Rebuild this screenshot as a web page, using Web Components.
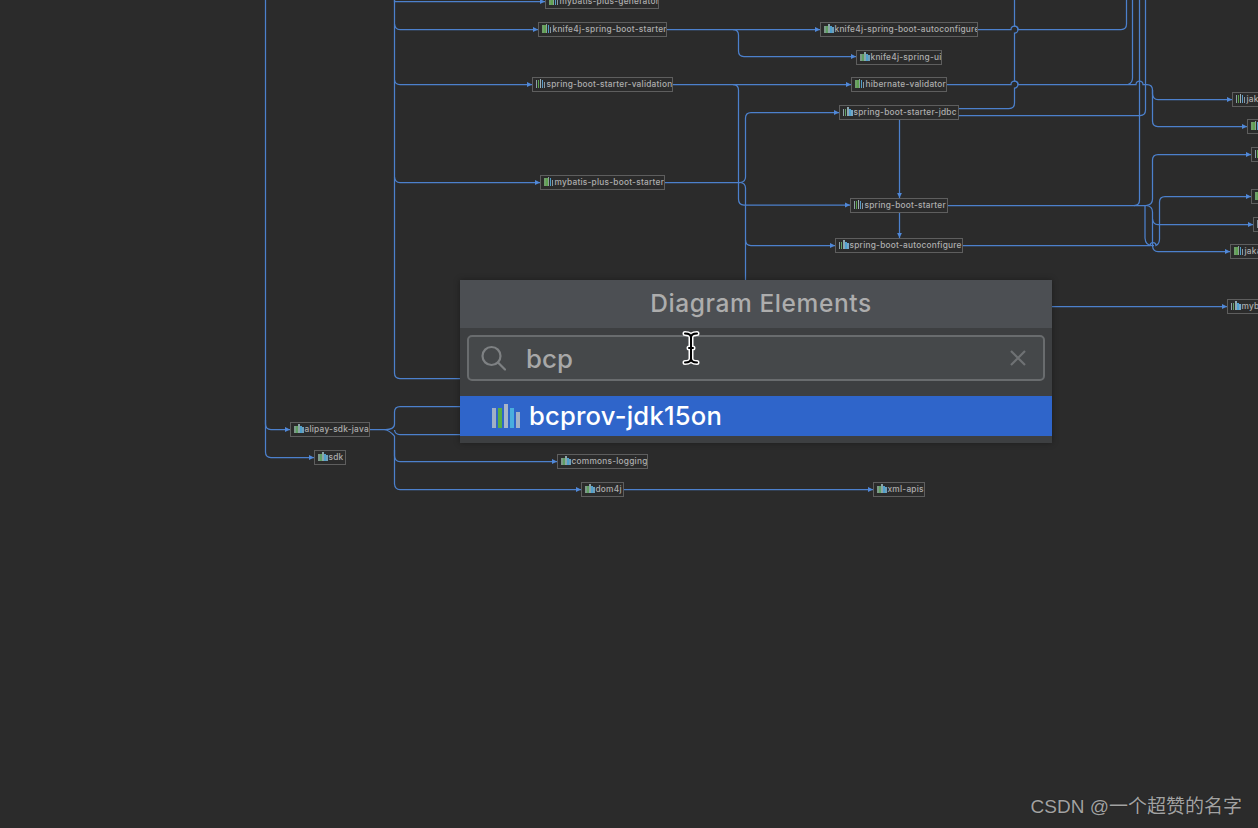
<!DOCTYPE html>
<html lang="en">
<head>
<meta charset="utf-8">
<title>Diagram Elements</title>
<style>
html,body{margin:0;padding:0;background:#2b2b2b;overflow:hidden}
</style>
</head>
<body>
<dep-graph>
  <dep-node x="545" y="-6" w="114" v="green">mybatis-plus-generator</dep-node>
  <dep-node x="538" y="22" w="129" v="green">knife4j-spring-boot-starter</dep-node>
  <dep-node x="532" y="77" w="141" v="thin">spring-boot-starter-validation</dep-node>
  <dep-node x="540" y="175" w="125" v="green">mybatis-plus-boot-starter</dep-node>
  <dep-node x="820" y="22" w="158" v="teal">knife4j-spring-boot-autoconfigure</dep-node>
  <dep-node x="856" y="50" w="86" v="teal">knife4j-spring-ui</dep-node>
  <dep-node x="851" y="77" w="96" v="green">hibernate-validator</dep-node>
  <dep-node x="839" y="105" w="120" v="blue">spring-boot-starter-jdbc</dep-node>
  <dep-node x="850" y="198" w="98" v="thin">spring-boot-starter</dep-node>
  <dep-node x="835" y="238" w="128" v="blue">spring-boot-autoconfigure</dep-node>
  <dep-node x="1232" y="92" w="60" v="thin">jak</dep-node>
  <dep-node x="1247" y="119" w="40" v="green"></dep-node>
  <dep-node x="1251" y="147" w="40" v="thin"></dep-node>
  <dep-node x="1251" y="189" w="40" v="green"></dep-node>
  <dep-node x="1253" y="217" w="40" v="none"></dep-node>
  <dep-node x="1230" y="244" w="60" v="green">jakar</dep-node>
  <dep-node x="1227" y="299" w="60" v="blue">myb</dep-node>
  <dep-node x="290" y="422" w="80" v="teal">alipay-sdk-java</dep-node>
  <dep-node x="314" y="450" w="32" v="teal">sdk</dep-node>
  <dep-node x="557" y="454" w="91" v="teal">commons-logging</dep-node>
  <dep-node x="581" y="482" w="43" v="teal">dom4j</dep-node>
  <dep-node x="873" y="482" w="52" v="teal">xml-apis</dep-node>

  <search-popup slot="overlay" title-text="Diagram Elements" query="bcp">
    <result-row>bcprov-jdk15on</result-row>
  </search-popup>
  <water-mark slot="overlay">CSDN @一个超赞的名字</water-mark>
</dep-graph>

<script>
const E = [
 ['M265.5 0V424Q265.5 429.5 271 429.5H290',1],
 ['M265.5 420V452Q265.5 457.5 271 457.5H314',1],
 ['M394.5 0V373Q394.5 378.5 400 378.5H470',0],
 ['M394.5 0V1.5H545',1],
 ['M394.5 24Q395 29.5 400 29.5H538',1],
 ['M394.5 80Q395 84.5 400 84.5H532',1],
 ['M394.5 177Q395 182.5 400 182.5H540',1],
 ['M667 29.5H820',1],
 ['M733 29.5Q738.5 29.5 738.5 35V51Q738.5 56.5 744 56.5H856',1],
 ['M673 84.5H851',1],
 ['M733 84.5Q738.5 84.5 738.5 90V199Q738.5 205 744 205H850',1],
 ['M665 182.5H740',0],
 ['M740 182.5Q745.5 182 745.5 177V118Q745.5 112.5 751 112.5H839',1],
 ['M740 182.5Q745.5 183 745.5 188V240Q745.5 245.5 751 245.5H835',1],
 ['M745.5 240V290',0],
 ['M959 108.5H1009Q1014.5 108.5 1014.5 103V88A3.5 3.5 0 0 0 1014.5 81V33A3.5 3.5 0 0 0 1014.5 26V0',0],
 ['M959 115.5H1140Q1145.5 115.5 1145.5 110V0',0],
 ['M899.5 119V198',1],
 ['M899.5 212V238',1],
 ['M978 29.5H1011A3.5 3.5 0 0 1 1018 29.5H1121Q1126.5 29.5 1126.5 24V0',0],
 ['M947 84.5H1011A3.5 3.5 0 0 1 1018 84.5H1136A3.5 3.5 0 0 1 1143 84.5H1147Q1152.5 84.5 1152.5 90V94Q1153 99.5 1158 99.5H1232',1],
 ['M1152.5 90V121Q1152.5 126.5 1158 126.5H1247',1],
 ['M1128 84.5Q1132.5 83 1132.5 78V0',0],
 ['M1139.5 0V200Q1139.5 205.5 1134 205.5',0],
 ['M948 205.5H1146',0],
 ['M1146 205.5Q1152.5 205 1152.5 199V160Q1152.5 154.5 1158 154.5H1251',1],
 ['M1146 205.5Q1152.5 206 1152.5 212V246Q1153 251.5 1158 251.5H1230',1],
 ['M1152.5 219Q1153 224.5 1158 224.5H1253',1],
 ['M1145 205.5V238Q1145.5 245.5 1152 245.5H1154',0],
 ['M963 245.5H1150A3 3 0 0 1 1156 245.5Q1159.5 244 1159.5 239V202Q1159.5 196.5 1165 196.5H1251',1],
 ['M1050 306.5H1227',1],
 ['M370 429.5H384Q389 430 394.5 436',0],
 ['M384 429.5Q394.5 430 394.5 424V412Q394.5 406.5 400 406.5H470',0],
 ['M394.5 430Q395 434.5 400 434.5H470',0],
 ['M394.5 436V456Q395 461.5 400 461.5H557',1],
 ['M394.5 450V484Q395 489.5 400 489.5H581',1],
 ['M624 489.5H873',1],
];

class DepGraph extends HTMLElement{
  constructor(){
    super();
    const paths = E.map(([d,a])=>`<path d="${d}"${a?' marker-end="url(#arr)"':''}/>`).join('');
    this.attachShadow({mode:'open'}).innerHTML = `
    <style>
      :host{display:block;position:relative;width:1258px;height:828px;overflow:hidden;background:#2b2b2b;
        font-family:Inter,"Noto Sans",sans-serif}
      svg.edges{position:absolute;left:0;top:0;width:1258px;height:828px}
      path{fill:none;stroke:#4c80cc;stroke-width:1.25}
      marker path{fill:#5088d8;stroke:none}
    </style>
    <svg class="edges" viewBox="0 0 1258 828">
      <defs><marker id="arr" markerUnits="userSpaceOnUse" markerWidth="5" markerHeight="6" refX="5" refY="3" orient="auto">
        <path d="M0 .6L5 3L0 5.4Z"/></marker></defs>
      ${paths}
    </svg>
    <slot></slot>
    <slot name="overlay"></slot>`;
  }
}
const V = {
  thin:  [['#8fa0a8',1,1],['#5aa04a',1,.8],['#9fb0b8',1,0],['#5a9cc8',1,.8],['#8c979c',1,3]],
  green: [['#6f9f6a',2,1],['#5fa04f',2,1],['#8aa49a',1.2,0],['#4f9cc8',1,1],['#8c979c',1,3]],
  teal:  [['#7d9a8a',2,1.6],['#5f9f62',2,1.6],['#8aa6a8',2,0],['#4f9fcc',2,1.6],['#70a0b8',1.6,3]],
  blue:  [['#8fa0a8',1,1.6],['#5f9f62',1,1.6],['#8fa8b0',2,0],['#4fa0d0',2,1.6],['#78a8c4',2,3]],
  none:  [['#8c979c',1,1]],
};
class BarIcon extends HTMLElement{
  connectedCallback(){
    const v=V[this.getAttribute('v')]||V.teal;
    let x=0,r='';
    v.forEach(([c,w,t])=>{r+=`<rect x="${x}" y="${t}" width="${w}" height="${9-t}" fill="${c}"/>`;x+=w+(w<1.5?1:0)});
    const s=this.shadowRoot||this.attachShadow({mode:'open'});
    s.innerHTML=`<style>:host{display:block;flex:none;width:10px;height:9px;margin-top:-2px}svg{display:block}</style>
      <svg width="10" height="9" viewBox="0 0 10 9" shape-rendering="crispEdges">${r}</svg>`;
  }
}
class DepNode extends HTMLElement{
  constructor(){
    super();
    this.attachShadow({mode:'open'}).innerHTML=`
    <style>
      :host{position:absolute;display:flex;align-items:center;gap:1px;box-sizing:border-box;height:15px;
        padding:0 0 0 2.5px;background:#2b2b2b;border:1px solid #5e5e5e;overflow:hidden;white-space:nowrap;
        font:500 8.3px/13px Inter,"Noto Sans",sans-serif;letter-spacing:.24px;color:#aeaeae}
      span{display:block}
    </style>
    <bar-icon></bar-icon><span><slot></slot></span>`;
  }
  connectedCallback(){
    this.style.left=this.getAttribute('x')+'px';
    this.style.top=this.getAttribute('y')+'px';
    this.style.width=this.getAttribute('w')+'px';
    const b=this.shadowRoot.querySelector('bar-icon');
    b.setAttribute('v',this.getAttribute('v'));
    if(b.connectedCallback)b.connectedCallback();
  }
}
class SearchPopup extends HTMLElement{
  constructor(){
    super();
    this.attachShadow({mode:'open'}).innerHTML=`
    <style>
      :host{position:absolute;left:460px;top:280px;width:592px;height:163px;display:flex;flex-direction:column;
        background:#3d3f41;box-shadow:0 0 6px rgba(0,0,0,.35);font-family:Inter,"Noto Sans",sans-serif}
      header{flex:none;height:48px;display:flex;align-items:center;justify-content:center;
        background:#4c4f53;color:#adadad;font-size:24.5px;font-weight:500;letter-spacing:.6px;padding:0 0 3px 10px;box-sizing:border-box}
      .wrap{flex:none;height:68px;box-sizing:border-box;padding:7px 7px 15px}
      .box{box-sizing:border-box;height:46px;border:2px solid #696c6e;border-radius:5px;background:#45484a;
        display:flex;align-items:center;padding:0 16px 0 11px;color:#a8a8a8;font-size:25.8px;font-weight:500;letter-spacing:.1px}
      .q{flex:1;margin-left:20px}
      svg{display:block;flex:none}
    </style>
    <header></header>
    <div class="wrap"><div class="box">
      <svg width="26" height="26" viewBox="0 0 26 26" fill="none" stroke="#7e8183" stroke-width="2.2">
        <circle cx="11.5" cy="11" r="9"/><path d="M18 17.5L25 24.5" stroke-linecap="round"/>
      </svg>
      <span class="q"></span>
      <svg width="18" height="18" viewBox="0 0 18 18" fill="none" stroke="#6f7274" stroke-width="2.2"><path d="M2 2L16 16M16 2L2 16"/></svg>
    </div></div>
    <slot></slot>
    <i-cursor></i-cursor>`;
  }
  connectedCallback(){
    this.shadowRoot.querySelector('header').textContent=this.getAttribute('title-text');
    this.shadowRoot.querySelector('.q').textContent=this.getAttribute('query');
  }
}
class ResultRow extends HTMLElement{
  constructor(){
    super();
    this.attachShadow({mode:'open'}).innerHTML=`
    <style>
      :host{display:flex;align-items:center;box-sizing:border-box;height:40px;padding:0 0 0 32px;background:#2f65ca;
        color:#fff;font-size:25.6px;font-weight:500;letter-spacing:.2px}
      svg{display:block;flex:none;margin-right:8px}
      span{padding-bottom:1px}
    </style>
    <svg width="29" height="24" viewBox="0 0 29 24">
      <rect x="0" y="4" width="4" height="20" fill="#9fb0c6"/>
      <rect x="6" y="4" width="4" height="20" fill="#58ad46"/>
      <rect x="12" y="0" width="4" height="24" fill="#a9b6c8"/>
      <rect x="18" y="4" width="4" height="20" fill="#4aaede"/>
      <rect x="24" y="8" width="4" height="16" fill="#a3b2c6"/>
    </svg>
    <span><slot></slot></span>`;
  }
}
class ICursor extends HTMLElement{
  constructor(){
    super();
    this.attachShadow({mode:'open'}).innerHTML=`
    <style>:host{position:absolute;left:221px;top:49px;width:20px;height:38px;display:block}svg{display:block}</style>
    <svg width="20" height="38" viewBox="0 0 20 38" fill="none" stroke-linecap="round" stroke-linejoin="round">
      <path d="M4 4.5C7 4.5 10 5 10 8.5V29.5C10 33 7 33.5 4 33.5M16 4.5C13 4.5 10 5 10 8.5M16 33.5C13 33.5 10 33 10 29.5M8 19H12" stroke="#fff" stroke-width="5"/>
      <path d="M4 4.5C7 4.5 10 5 10 8.5V29.5C10 33 7 33.5 4 33.5M16 4.5C13 4.5 10 5 10 8.5M16 33.5C13 33.5 10 33 10 29.5M8 19H12" stroke="#000" stroke-width="2"/>
    </svg>`;
  }
}
class WaterMark extends HTMLElement{
  constructor(){
    super();
    this.attachShadow({mode:'open'}).innerHTML=`
    <style>:host{position:absolute;right:16px;top:795px;display:block;white-space:nowrap;
      font:400 19px/24px "Liberation Sans","Noto Sans CJK SC",sans-serif;color:#a2a2a2;text-shadow:0 0 1px rgba(0,0,0,.5)}</style>
    <slot></slot>`;
  }
}
customElements.define('bar-icon',BarIcon);
customElements.define('dep-node',DepNode);
customElements.define('dep-graph',DepGraph);
customElements.define('result-row',ResultRow);
customElements.define('i-cursor',ICursor);
customElements.define('search-popup',SearchPopup);
customElements.define('water-mark',WaterMark);
</script>
</body>
</html>
